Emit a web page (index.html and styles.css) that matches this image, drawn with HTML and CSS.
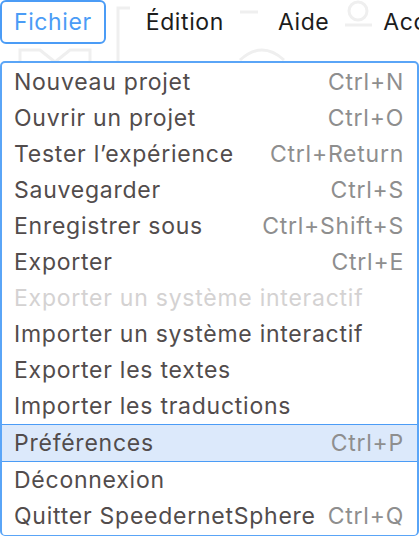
FILE: index.html
```html
<!DOCTYPE html>
<html lang="fr">
<head>
<meta charset="utf-8">
<link rel="stylesheet" href="styles.css">
</head>
<body>
<div class="app">
  <svg class="bg-art" width="419" height="70" viewBox="0 0 419 70" aria-hidden="true">
    <g fill="none" stroke="#efefef" stroke-width="3">
      <path d="M20 70 L20 50 L40 50 L55 62 L70 50 L90 50 L90 70"/>
      <path d="M118 70 L118 8 L130 8"/>
      <path d="M240 60 Q262 40 284 60"/>
      <path d="M240 12 L258 12"/>
      <circle cx="358" cy="11" r="9"/>
      <path d="M345 25 L372 25"/>
    </g>
  </svg>
  <nav class="menubar">
    <span class="menubar-item active">Fichier</span>
    <span class="menubar-item">Édition</span>
    <span class="menubar-item">Aide</span>
    <span class="menubar-item">Accessibilité</span>
  </nav>
  <ul class="menu">
    <li class="item"><span class="label">Nouveau projet</span><span class="key">Ctrl+N</span></li>
    <li class="item"><span class="label">Ouvrir un projet</span><span class="key">Ctrl+O</span></li>
    <li class="item"><span class="label">Tester l’expérience</span><span class="key">Ctrl+Return</span></li>
    <li class="item"><span class="label">Sauvegarder</span><span class="key">Ctrl+S</span></li>
    <li class="item"><span class="label">Enregistrer sous</span><span class="key">Ctrl+Shift+S</span></li>
    <li class="item"><span class="label">Exporter</span><span class="key">Ctrl+E</span></li>
    <li class="item disabled"><span class="label">Exporter un système interactif</span></li>
    <li class="item"><span class="label">Importer un système interactif</span></li>
    <li class="item"><span class="label">Exporter les textes</span></li>
    <li class="item"><span class="label">Importer les traductions</span></li>
    <li class="item selected"><span class="label">Préférences</span><span class="key">Ctrl+P</span></li>
    <li class="item"><span class="label">Déconnexion</span></li>
    <li class="item"><span class="label">Quitter SpeedernetSphere</span><span class="key">Ctrl+Q</span></li>
  </ul>
</div>
</body>
</html>
```
FILE: styles.css
```css
html, body {
  margin: 0;
  padding: 0;
  background: #ffffff;
  overflow: hidden;
}
body {
  font-family: Inter, "Noto Sans", sans-serif;
  width: 419px;
  height: 536px;
}
.app {
  position: relative;
  width: 419px;
}
.bg-art {
  position: absolute;
  left: 0;
  top: 0;
  z-index: 0;
}
.menubar {
  position: relative;
  z-index: 1;
  display: flex;
  gap: 26px;
  height: 44px;
  white-space: nowrap;
  overflow: hidden;
}
.menubar-item {
  display: flex;
  align-items: center;
  box-sizing: border-box;
  height: 44px;
  padding: 0 12px;
  border: 2px solid transparent;
  border-radius: 6px;
  font-size: 23px;
  font-weight: 400;
  letter-spacing: 0.6px;
  color: #1c1c1c;
}
.menubar-item.active {
  border-color: #4b9cf6;
  color: #4b9cf6;
}
.menu {
  position: relative;
  z-index: 1;
  list-style: none;
  margin: 17px 0 0 0;
  padding: 1px 0;
  box-sizing: border-box;
  width: 419px;
  border: 2px solid #5aa5f7;
  border-bottom-width: 1px;
  border-radius: 5px;
  background: #ffffff;
}
.item {
  display: flex;
  align-items: center;
  justify-content: space-between;
  height: 36px;
  padding: 0 13px 0 12px;
  font-size: 23px;
  font-weight: 400;
  letter-spacing: 0.75px;
  color: #524c4c;
}
.item .key {
  color: #8e8e8e;
}
.item.disabled .label {
  color: #d4d2d2;
}
.item.selected {
  background: #dce9fb;
  border-top: 1px solid #4b9cf6;
  border-bottom: 1px solid #4b9cf6;
}
```
